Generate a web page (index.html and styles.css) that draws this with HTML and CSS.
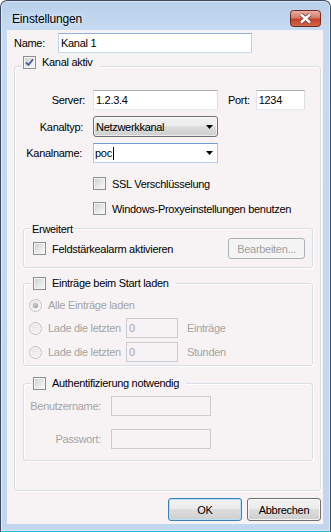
FILE: index.html
```html
<!DOCTYPE html>
<html lang="de">
  <head>
    <title>Einstellungen</title>
    <meta charset="UTF-8" />
    <link rel="stylesheet" href="styles.css">
  </head>

  <body>
    <div class="window">
      <div class="titlebar">
        <span class="title">Einstellungen</span>
        <span class="close">
          <svg width="31" height="17" viewBox="0 0 31 17">
            <defs>
              <linearGradient id="closeBg" x1="0" y1="0" x2="0" y2="1">
                <stop offset="0" stop-color="#eab3a8"/>
                <stop offset="0.45" stop-color="#d57c69"/>
                <stop offset="0.55" stop-color="#c3432a"/>
                <stop offset="1" stop-color="#d2694f"/>
              </linearGradient>
            </defs>
            <rect x="0.5" y="0.5" width="30" height="16" rx="3" fill="url(#closeBg)" stroke="#6e2a20"/>
            <path d="M11 4.5 L20 12.5 M20 4.5 L11 12.5" stroke="#6a3a33" stroke-width="4.2"/>
            <path d="M11 4.5 L20 12.5 M20 4.5 L11 12.5" stroke="#fff" stroke-width="2.4"/>
          </svg>
        </span>
      </div>

      <div class="client">
        <div class="name-row">
          <span class="name-label">Name:</span>
          <input class="textbox textbox-hover name-input" type="text" value="Kanal 1">
        </div>

        <div class="group group-main">
          <div class="legend legend-check legend-main">
            <span class="cb">
              <svg width="11" height="11" viewBox="0 0 11 11">
                <path d="M2 5.5 L4.5 8 L9 2.2" fill="none" stroke="#4a5f8c" stroke-width="1.8"/>
              </svg>
            </span>
            <span>Kanal aktiv</span>
          </div>

          <div class="field-row server-row">
            <span class="field-label">Server:</span>
            <input class="textbox server-input" type="text" value="1.2.3.4">
            <span class="port-label">Port:</span>
            <input class="textbox port-input" type="text" value="1234">
          </div>

          <div class="field-row">
            <span class="field-label label-typ">Kanaltyp:</span>
            <div class="combo">
              <span>Netzwerkkanal</span>
              <svg width="7" height="4" viewBox="0 0 7 4"><path d="M0 0h7L3.5 4z" fill="#000"/></svg>
            </div>
          </div>

          <div class="field-row">
            <span class="field-label label-name">Kanalname:</span>
            <div class="combo-edit">
              <span>poc</span><span class="caret"></span>
              <svg class="combo-arrow" width="7" height="4" viewBox="0 0 7 4"><path d="M0 0h7L3.5 4z" fill="#000"/></svg>
            </div>
          </div>

          <div class="check-row ssl-row">
            <span class="cb"></span><span>SSL Verschlüsselung</span>
          </div>
          <div class="check-row proxy-row">
            <span class="cb"></span><span>Windows-Proxyeinstellungen benutzen</span>
          </div>

          <div class="group group-sub group-erweitert">
            <div class="legend legend-text">Erweitert</div>
            <div class="alarm-row">
              <span class="cb"></span><span class="alarm-text">Feldstärkealarm aktivieren</span>
              <button class="btn btn-disabled" type="button">Bearbeiten...</button>
            </div>
          </div>

          <div class="group group-sub group-eintraege">
            <div class="legend legend-check">
              <span class="cb"></span><span>Einträge beim Start laden</span>
            </div>
            <div class="radio-row radio-first">
              <span class="rb rb-on"></span><span>Alle Einträge laden</span>
            </div>
            <div class="radio-row radio-second">
              <span class="rb"></span><span class="radio-label">Lade die letzten</span>
              <input class="textbox textbox-off count-input" type="text" value="0" disabled>
              <span class="unit">Einträge</span>
            </div>
            <div class="radio-row radio-third">
              <span class="rb"></span><span class="radio-label">Lade die letzten</span>
              <input class="textbox textbox-off count-input" type="text" value="0" disabled>
              <span class="unit">Stunden</span>
            </div>
          </div>

          <div class="group group-sub group-auth">
            <div class="legend legend-check">
              <span class="cb"></span><span>Authentifizierung notwendig</span>
            </div>
            <div class="auth-row auth-user">
              <span class="auth-label">Benutzername:</span>
              <input class="textbox textbox-off auth-input" type="text" disabled>
            </div>
            <div class="auth-row auth-pass">
              <span class="auth-label">Passwort:</span>
              <input class="textbox textbox-off auth-input" type="password" disabled>
            </div>
          </div>
        </div>

        <div class="buttons">
          <button class="btn btn-default" type="button">OK</button>
          <button class="btn" type="button">Abbrechen</button>
        </div>
      </div>
    </div>
  </body>
</html>
```

FILE: styles.css
```css
body {
  margin: 0;
  font-family: "Liberation Sans", Arial, sans-serif;
  font-size: 11px;
  letter-spacing: -0.3px;
  color: #000;
  background: #fff;
}

.window {
  width: 331px;
  height: 532px;
  box-sizing: border-box;
  display: flex;
  flex-direction: column;
  padding: 0 7px 7px 6px;
  border: 1px solid #3d4c5f;
  border-bottom-color: #23b2dc;
  border-radius: 7px 7px 0 0;
  background: linear-gradient(#b9d0ea, #c6dbf2 30px, #c2d7ef);
  box-shadow: inset 0 0 0 1px rgba(255, 255, 255, 0.45);
}

.titlebar {
  height: 29px;
  flex: none;
  display: flex;
  justify-content: space-between;
  align-items: flex-start;
}

.title {
  margin: 10px 0 0 5px;
  font-size: 12px;
  line-height: 16px;
  letter-spacing: -0.15px;
  text-shadow: 0 0 6px rgba(255, 255, 255, 0.9);
}

.close {
  display: flex;
  margin: 9px 2px 0 0;
}

.client {
  flex: 1;
  padding-top: 3px;
  background: #f7f3f5;
}

/* Eingabefelder */
.textbox {
  box-sizing: border-box;
  height: 20px;
  margin: 0;
  padding: 0 2px;
  border: 1px solid;
  border-color: #abadb3 #dbdfe6 #e3e9ef #e2e3ea;
  background: #fff;
  font: inherit;
  letter-spacing: inherit;
  color: #000;
  outline: none;
}

.textbox-hover {
  border-color: #8fb2d8 #b9d1ea #c7dcf0 #c0d6ee;
}

.textbox-off {
  border-color: #c9cbce;
  background: #f7f3f5;
  color: #a3a3a3;
}

.name-row {
  display: flex;
  align-items: center;
  height: 20px;
  margin-left: 7px;
}

.name-label {
  width: 44px;
}

.name-input {
  width: 194px;
}

/* Gruppen */
.group {
  box-sizing: border-box;
  border: 1px solid #d5dfe5;
  border-radius: 3px;
  box-shadow: inset 1px 1px 0 #fff, 1px 1px 0 #fff;
}

.group-main {
  height: 425px;
  margin: 13px 2px 0 7px;
}

.group-sub {
  width: 290px;
  margin-left: 8px;
}

.legend {
  display: flex;
  align-items: center;
  gap: 6px;
  width: max-content;
  height: 13px;
  line-height: 13px;
  background: #f7f3f5;
}

.legend-check {
  margin: -7px 0 0 7px;
  padding: 0 7px 0 2px;
}

.legend-main {
  margin: -11px 0 0 6px;
}

.legend-text {
  margin: -6px 0 0 6px;
  padding: 0 1px 0 2px;
}

/* Kontrollkästchen */
.cb {
  box-sizing: border-box;
  flex: none;
  display: flex;
  align-items: center;
  justify-content: center;
  width: 13px;
  height: 13px;
  border: 1px solid #8e8f8f;
  background: linear-gradient(135deg, #c9cdd2, #eeeff0 70%, #fafafa);
  box-shadow: inset 0 0 0 1px #f4f4f4;
}

.rb {
  box-sizing: border-box;
  flex: none;
  display: flex;
  align-items: center;
  justify-content: center;
  width: 13px;
  height: 13px;
  border: 1px solid #c4c4c4;
  border-radius: 50%;
  background: linear-gradient(135deg, #e2e2e2, #f8f8f8);
  box-shadow: inset 0 0 0 1px #f6f6f6;
}

.rb-on::after {
  content: "";
  width: 5px;
  height: 5px;
  border-radius: 50%;
  background: radial-gradient(circle at 40% 35%, #d0d0d0, #8e8e8e);
}

/* Felder Server / Kanal */
.field-row {
  display: flex;
  align-items: center;
  margin-top: 6px;
}

.server-row {
  height: 20px;
  margin-top: 21px;
}

.field-label {
  box-sizing: border-box;
  width: 70px;
  margin-right: 8px;
  text-align: right;
}

.label-typ {
  padding-right: 2px;
}

.label-name {
  padding-right: 3px;
}

.server-input {
  width: 125px;
}

.port-label {
  margin: 0 6px 0 10px;
}

.port-input {
  width: 49px;
}

.combo {
  box-sizing: border-box;
  display: flex;
  align-items: center;
  justify-content: space-between;
  width: 125px;
  height: 21px;
  padding: 0 4px 0 2px;
  border: 1px solid #707070;
  border-radius: 3px;
  background: linear-gradient(#f2f2f2, #ebebeb 50%, #dddddd 50%, #cfcfcf);
  box-shadow: inset 0 0 0 1px rgba(255, 255, 255, 0.6);
}

.combo-edit {
  box-sizing: border-box;
  display: flex;
  align-items: center;
  width: 125px;
  height: 20px;
  padding: 0 4px 0 1px;
  border: 1px solid;
  border-color: #6e9fd3 #a3c6ea #b4d2ef #a9cbec;
  background: #fff;
}

.caret {
  width: 1px;
  height: 13px;
  margin-left: 1px;
  background: #000;
}

.combo-arrow {
  margin-left: auto;
}

.check-row {
  display: flex;
  align-items: center;
  gap: 6px;
  height: 13px;
  margin-left: 78px;
}

.ssl-row {
  margin-top: 14px;
}

.proxy-row {
  margin-top: 12px;
}

/* Erweitert */
.group-erweitert {
  margin-top: 13px;
  padding-bottom: 8px;
}

.alarm-row {
  display: flex;
  align-items: center;
  gap: 6px;
  height: 21px;
  margin: 2px 0 0 9px;
}

.alarm-row .btn {
  width: 77px;
  height: 21px;
  margin: 0 7px 0 auto;
}

/* Einträge */
.group-eintraege {
  margin-top: 15px;
  padding-bottom: 3px;
  color: #a3a3a3;
}

.group-eintraege .legend {
  color: #000;
}

.radio-row {
  display: flex;
  align-items: center;
  gap: 6px;
  height: 20px;
  margin-left: 5px;
}

.radio-first {
  margin-top: 5px;
}

.radio-second {
  margin-top: 3px;
}

.radio-third {
  margin-top: 4px;
}

.radio-label {
  width: 78px;
  margin-right: -6px;
}

.count-input {
  width: 52px;
}

.unit {
  margin-left: 3px;
}

/* Authentifizierung */
.group-auth {
  margin-top: 17px;
  padding-bottom: 11px;
  color: #a3a3a3;
}

.group-auth .legend {
  color: #000;
}

.auth-row {
  display: flex;
  align-items: center;
  height: 20px;
}

.auth-user {
  margin-top: 6px;
}

.auth-pass {
  margin-top: 13px;
}

.auth-label {
  width: 77px;
  margin-right: 10px;
  text-align: right;
}

.auth-input {
  width: 100px;
}

/* Schaltflächen */
.btn {
  box-sizing: border-box;
  width: 74px;
  height: 23px;
  padding: 0;
  border: 1px solid #707070;
  border-radius: 3px;
  background: linear-gradient(#f2f2f2, #ebebeb 50%, #dddddd 50%, #cfcfcf);
  box-shadow: inset 0 0 0 1px rgba(255, 255, 255, 0.7);
  font: inherit;
  letter-spacing: inherit;
  color: #000;
}

.btn-default {
  border-color: #3c7fb1;
  box-shadow: inset 0 0 0 1px #b6e1f8;
}

.btn-disabled {
  border-color: #adb2b5;
  background: #f4f4f4;
  box-shadow: none;
  color: #a0a0a0;
}

.buttons {
  display: flex;
  justify-content: flex-end;
  gap: 5px;
  margin: 7px 2px 0 0;
}
```
